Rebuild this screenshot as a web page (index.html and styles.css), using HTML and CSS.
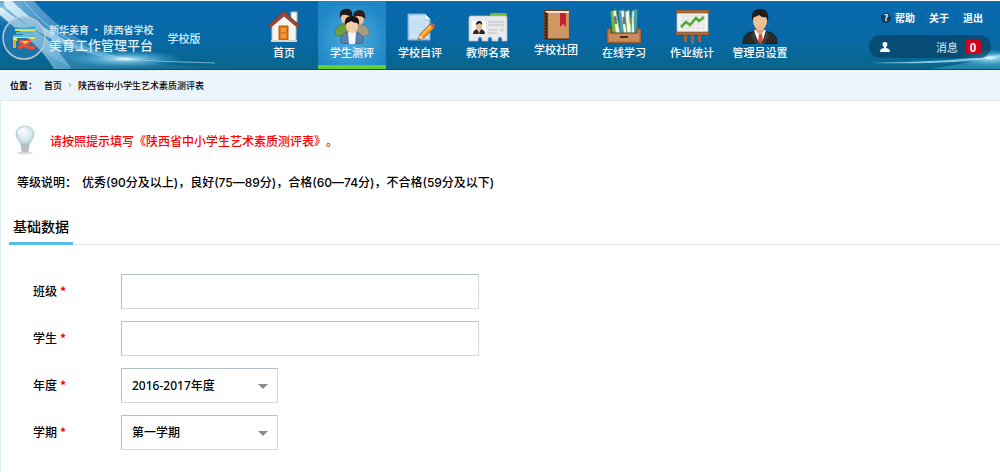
FILE: index.html
```html
<!DOCTYPE html>
<html lang="zh-CN">
<head>
  <meta charset="UTF-8" />
  <title>陕西省中小学生艺术素质测评表</title>
  <link rel="stylesheet" href="styles.css">
</head>
<body>
  <header class="header">
    <svg class="beam beam-left" viewBox="0 0 240 68" aria-hidden="true">
      <defs>
        <linearGradient id="ray" x1="0" y1="0" x2="1" y2="1">
          <stop offset="0" stop-color="#fff" stop-opacity=".8" />
          <stop offset=".5" stop-color="#8fd0f5" stop-opacity=".7" />
          <stop offset="1" stop-color="#8fd0f5" stop-opacity="0" />
        </linearGradient>
        <linearGradient id="band" x1="0" y1="0" x2="1" y2="1">
          <stop offset="0" stop-color="#fff" stop-opacity=".9" />
          <stop offset="1" stop-color="#7cc4ea" stop-opacity=".55" />
        </linearGradient>
        <radialGradient id="flare">
          <stop offset="0" stop-color="#fff" />
          <stop offset=".25" stop-color="#a8e4fb" stop-opacity=".7" />
          <stop offset="1" stop-color="#4bb4e6" stop-opacity="0" />
        </radialGradient>
      </defs>
      <path d="M0 0H34C52 22 80 42 120 56C160 66 200 64 235 68H75C45 56 20 30 0 6Z" fill="url(#ray)" opacity=".45" />
      <path d="M0 6C20 20 42 32 52 43C60 52 66 60 72 68H54C42 46 20 32 0 14Z" fill="url(#band)" />
      <path d="M12 0C38 26 75 48 118 58C78 54 30 32 4 4V0Z" fill="url(#band)" />
      <path d="M24 0C48 32 90 54 130 58C160 61 190 61 215 62" fill="none" stroke="#b9e6fa" stroke-opacity=".6" />
      <ellipse cx="125" cy="58" rx="58" ry="9" fill="url(#flare)" />
      <ellipse cx="4" cy="8" rx="36" ry="20" fill="url(#flare)" opacity=".45" />
    </svg>
    <svg class="beam beam-right" viewBox="0 0 130 68" aria-hidden="true">
      <path d="M0 62C50 61 95 59 130 54V56C95 62 50 63 0 62Z" fill="#aee6fa" opacity=".75" />
      <path d="M60 68C85 64 110 60 130 52V68Z" fill="#5fc6e6" opacity=".35" />
      <ellipse cx="120" cy="57" rx="34" ry="9" fill="url(#flare)" />
    </svg>

    <a class="brand" href="#">
      <svg class="logo" viewBox="0 0 46 46" aria-hidden="true">
        <circle cx="23" cy="23" r="21" fill="#3f8fc4" fill-opacity=".35" stroke="#bcc7d0" stroke-width="1.5" />
        <path d="M14 12Q24 14 34 11V14H14Z" fill="#35a9c4" />
        <path d="M14 14H34V16H14Z" fill="#d8dc63" />
        <path d="M15 17H32V19H15Z" fill="#4fb9cf" />
        <path d="M12 20H34V23H12Z" fill="#58bdd3" />
        <path d="M12 22H34V24H29V23H16V26H12Z" fill="#f3e24e" />
        <path d="M12 25H15V33H12Z" fill="#f3a51f" />
        <path d="M18 25H30V28L26 30Q29 32 34 31V34Q27 35 23 32Q20 34 17 34V31L20 30L18 28Z" fill="#e8503c" />
        <path d="M20 26H28L24 29Z" fill="#f7d94e" />
      </svg>
      <span class="brand-name">
        <span class="brand-top">新华美育 · 陕西省学校</span>
        <span class="brand-main">美育工作管理平台</span>
      </span>
      <span class="brand-edition">学校版</span>
    </a>

    <nav class="nav">
      <a href="#">
        <svg viewBox="0 0 36 36" aria-hidden="true">
          <path d="M25 4H31V14H25Z" fill="#f3f3f1" stroke="#b9b9b9" />
          <path d="M6 17L18 6L30 17V33H6Z" fill="#f6f5f2" stroke="#c4c1bb" />
          <path d="M2 18L18 3L34 18L32 20L18 8L4 20Z" fill="#9d4638" stroke="#713025" stroke-width=".7" />
          <path d="M12 17H23V33H12Z" fill="#fff" />
          <path d="M13 18H22V32H13Z" fill="#e17b1d" stroke="#a9520d" />
          <path d="M15 20H20V24H15ZM15 26H20V30H15Z" fill="#f09a3d" />
          <path d="M5 32H31V34H5Z" fill="#d8d5cf" />
        </svg>
        <span>首页</span>
      </a>
      <a class="active" href="#">
        <svg viewBox="0 0 36 36" aria-hidden="true">
          <path d="M1 27C1 20 4 17 10 16H15V28Q6 29 1 27Z" fill="#6f9e3c" stroke="#4c7425" stroke-width=".6" />
          <path d="M21 28V16H26C32 17 35 20 35 27Q30 29 21 28Z" fill="#a69c84" stroke="#756d5a" stroke-width=".6" />
          <ellipse cx="12" cy="10" rx="5" ry="6" fill="#edc19a" />
          <ellipse cx="25" cy="11" rx="5" ry="6" fill="#edc19a" />
          <path d="M6 10C5 3 8 1 12 1C17 0 19 4 18 9C15 8 12 6 8 7Z" fill="#1d1a1b" />
          <path d="M19 9C19 4 22 2 26 2C30 2 32 6 31 11C28 8 25 7 19 9Z" fill="#29201f" />
          <path d="M7 35C6 28 9 24 18 24C27 24 30 28 29 35Q18 37 7 35Z" fill="#5c81ad" stroke="#35577f" stroke-width=".7" />
          <path d="M14 24H22L21 36H15Z" fill="#f4f8fc" />
          <ellipse cx="18" cy="18" rx="6" ry="7" fill="#f5cfac" />
          <path d="M11 17C10 11 13 8 18 8C23 8 26 11 25 17L23 15Q20 15 17 13Q14 15 13 15Z" fill="#171516" />
        </svg>
        <span>学生测评</span>
      </a>
      <a href="#">
        <svg viewBox="0 0 36 36" aria-hidden="true">
          <path d="M6 6H23L28 11V32H6Z" fill="#b5d8f0" stroke="#7bb0d6" />
          <path d="M8 8H22V13H26V30H8Z" fill="#cae4f5" />
          <path d="M23 6L28 11H23Z" fill="#f2f9fe" />
          <path d="M10 13H21M10 16H24M10 19H23M10 22H19M10 25H17" stroke="#b4d6ec" stroke-width=".7" />
          <path d="M16 32L18 26L28 16L32 20L22 30Z" fill="#f58f22" stroke="#a85410" stroke-width=".7" />
          <path d="M20 27L29 18" stroke="#ffd06a" stroke-width="1.5" />
          <path d="M28 16L30 15Q33 16 33 18L32 20Z" fill="#c96452" />
          <path d="M16 32L18 27L21 30Z" fill="#f6dfb9" />
          <path d="M16 32L17 30L18 31Z" fill="#222" />
        </svg>
        <span>学校自评</span>
      </a>
      <a href="#">
        <svg class="wide" viewBox="0 0 40 36" aria-hidden="true">
          <path d="M22 10V7Q22 5 24 5H37Q39 5 39 7V12H22Z" fill="#76bc32" />
          <path d="M3 8H37Q39 8 39 10V33H34V31A2 2 0 0 0 30 31V33H24V31A2 2 0 0 0 20 31V33H14V31A2 2 0 0 0 10 31V33H1V10Q1 8 3 8Z" fill="#e7e9ea" stroke="#bfc4c8" stroke-width=".7" />
          <path d="M4 13H18V26H4Z" fill="#fff" />
          <path d="M5 26Q5 21 11 21Q17 21 17 26Z" fill="#25272b" />
          <path d="M9 21H13L11 25Z" fill="#fff" />
          <path d="M11 22L12 26H10Z" fill="#d5342a" />
          <ellipse cx="11" cy="18" rx="3" ry="4" fill="#eabd96" />
          <path d="M8 17Q8 13 11 13Q15 13 14 17L12 15Z" fill="#202020" />
          <path d="M20 14H36M20 17H36M20 22H29M20 25H29M32 22H36" stroke="#b7bcc1" />
        </svg>
        <span>教师名录</span>
      </a>
      <a href="#">
        <svg class="short" viewBox="0 0 36 33" aria-hidden="true">
          <path d="M6 3Q6 2 8 2H31V32H8Q6 32 6 30Z" fill="#6a3d20" />
          <path d="M10 4H31V31H10Z" fill="#c98c5b" />
          <path d="M11 5H30V30H11Z" fill="#d09666" />
          <path d="M7 3H31V5H9Z" fill="#f2e6d4" />
          <path d="M8 5V31" stroke="#38200f" stroke-width="2" stroke-dasharray="2 1" />
          <path d="M22 5H28V19L25 16L22 19Z" fill="#c8202c" />
          <path d="M7 31H31" stroke="#4b2912" />
        </svg>
        <span>学校社团</span>
      </a>
      <a href="#">
        <svg viewBox="0 0 36 36" aria-hidden="true">
          <path d="M5 4L10 2L14 25H7Z" fill="#eef3ef" stroke="#79aa44" />
          <path d="M5 4L7 3L10 25H7Z" fill="#6db52c" />
          <path d="M13 3L18 2L21 25H15Z" fill="#eef3f3" stroke="#5b8f9b" />
          <path d="M13 3L15 3L18 25H15Z" fill="#4a9db0" />
          <path d="M19 4L23 2L26 25H21Z" fill="#f4f6f2" stroke="#7dae3c" />
          <path d="M26 3L31 2L30 25H25Z" fill="#e6eef2" stroke="#559c9b" />
          <path d="M28 3L31 2L30 25H28Z" fill="#43a398" />
          <path d="M8 9L10 8L11 16H9ZM17 9L19 9L19 16H17ZM23 9L24 16M28 9L28 16" fill="#69727a" stroke="#69727a" stroke-width=".5" />
          <path d="M1 22L5 19V25H31V19L35 22V34Q35 35 33 35H3Q1 35 1 34Z" fill="#b77748" stroke="#774321" stroke-width=".8" />
          <path d="M3 26H33V33H3Z" fill="#c98b5c" />
          <path d="M14 28H22V30H14Z" fill="#4b2a16" />
        </svg>
        <span>在线学习</span>
      </a>
      <a href="#">
        <svg viewBox="0 0 36 36" aria-hidden="true">
          <path d="M10 25H13V34H10ZM17 25H20V36H17ZM24 25H27V34H24Z" fill="#a06238" />
          <path d="M3 4H34V25H3Z" fill="#f3f3ef" stroke="#bdb9ad" stroke-width=".7" />
          <path d="M6 8H31M6 12H31M6 16H31M6 20H31M9 6V22M14 6V22M19 6V22M24 6V22M29 6V22" stroke="#d1d4d5" stroke-width=".6" />
          <path d="M2 2H35V5H2Z" fill="#a96d42" stroke="#714322" stroke-width=".6" />
          <path d="M2 24H35V27H2Z" fill="#a96d42" stroke="#714322" stroke-width=".6" />
          <path d="M7 19L12 14L16 17L22 10L25 13L30 9" fill="none" stroke="#51a836" stroke-width="2.5" />
        </svg>
        <span>作业统计</span>
      </a>
      <a href="#">
        <svg viewBox="0 0 36 36" aria-hidden="true">
          <path d="M1 36Q0 26 9 24L14 22H22L27 24Q36 26 35 36Z" fill="#292929" stroke="#151515" stroke-width=".6" />
          <path d="M12 22H24L20 36H16Z" fill="#f6f6f6" />
          <path d="M17 26H20L21 36H16Z" fill="#e14724" />
          <path d="M11 23L18 36H14L9 28ZM25 23L19 36H23L27 28Z" fill="#3d3d3e" />
          <path d="M14 18H22V23L18 27L14 23Z" fill="#dca577" />
          <ellipse cx="18" cy="13" rx="7" ry="9" fill="#f0bf93" />
          <path d="M10 13C9 4 12 1 18 1C25 1 27 5 26 13L24 9Q20 10 17 7Q14 9 12 9Z" fill="#201d1d" />
        </svg>
        <span>管理员设置</span>
      </a>
    </nav>

    <div class="account">
      <div class="links">
        <span class="help">?</span>
        <a href="#">帮助</a>
        <a href="#">关于</a>
        <a href="#">退出</a>
      </div>
      <div class="user">
        <svg class="person" viewBox="0 0 10 10" aria-hidden="true">
          <path d="M5 0C7 0 8 1 7 4L6 5V6L9 7Q10 8 10 10H0Q0 8 1 7L4 6V5L3 4C2 1 3 0 5 0Z" fill="#fff" />
        </svg>
        <a href="#">消息 <b class="count">0</b></a>
      </div>
    </div>
  </header>

  <div class="place">
    <strong>位置：</strong>
    <a href="#">首页</a>
    <svg class="arrow" viewBox="0 0 4 6" aria-hidden="true"><path d="M1 1L3 3L1 5" fill="none" stroke="#8a9da8" /></svg>
    <a href="#">陕西省中小学生艺术素质测评表</a>
  </div>

  <main class="main">
    <div class="tip">
      <svg class="bulb" viewBox="0 0 22 30" aria-hidden="true">
        <defs>
          <radialGradient id="glass" cx=".5" cy=".35" r=".65">
            <stop offset="0" stop-color="#f6fbfd" />
            <stop offset=".6" stop-color="#d3e5ed" />
            <stop offset="1" stop-color="#a3bfcc" />
          </radialGradient>
        </defs>
        <ellipse cx="11" cy="28" rx="8" ry="1.5" fill="#d9dcde" />
        <path d="M11 1C17 1 20 5 20 9C20 14 15 17 15 21H7C7 17 2 14 2 9C2 5 5 1 11 1Z" fill="url(#glass)" stroke="#a9c0cb" stroke-width=".7" />
        <path d="M5 9Q6 4 11 4" fill="none" stroke="#fff" stroke-width="2" />
        <path d="M7 21H15V26Q11 29 7 26Z" fill="#ccd1d4" />
        <path d="M7 22H15M7 24H15M8 26H14" stroke="#959da2" stroke-width=".7" />
      </svg>
      <p>请按照提示填写《陕西省中小学生艺术素质测评表》。</p>
    </div>

    <p class="levels"><span>等级说明：</span>优秀(90分及以上)，良好(75—89分)，合格(60—74分)，不合格(59分及以下)</p>

    <div class="title"><h2>基础数据</h2></div>

    <form class="form">
      <div class="row">
        <label for="class">班级<i>*</i></label>
        <input type="text" id="class" name="class" required />
      </div>
      <div class="row">
        <label for="student">学生<i>*</i></label>
        <input type="text" id="student" name="student" required />
      </div>
      <div class="row">
        <label for="year">年度<i>*</i></label>
        <div class="select">
          <select id="year" name="year">
            <option>2016-2017年度</option>
          </select>
        </div>
      </div>
      <div class="row">
        <label for="term">学期<i>*</i></label>
        <div class="select">
          <select id="term" name="term">
            <option>第一学期</option>
          </select>
        </div>
      </div>
    </form>
  </main>
</body>
</html>
```
FILE: styles.css
```css
* {
  box-sizing: border-box;
}

body {
  margin: 0;
  background: white;
  color: black;
  font-family: "Noto Sans CJK SC", sans-serif;
  font-size: 12px;
  font-weight: 500;
  text-spacing-trim: space-all;
}

a {
  color: inherit;
  text-decoration: none;
}

p,
h2 {
  margin: 0;
}

svg {
  display: block;
}

/* header */
.header {
  position: relative;
  display: flex;
  height: 70px;
  border-top: 1px solid white;
  border-bottom: 1px solid #064e6b;
  background: linear-gradient(#086aae, #0869a8 55%, #09658a);
  color: white;
}

.beam {
  position: absolute;
  top: 0;
  height: 68px;
}

.beam-left {
  left: 0;
  width: 240px;
}

.beam-right {
  right: 0;
  width: 130px;
}

.brand {
  position: relative;
  display: flex;
  align-items: center;
  flex: 0 0 250px;
  padding: 6px 0 0 1px;
}

.logo {
  width: 46px;
  height: 46px;
}

.brand-name {
  display: flex;
  flex-direction: column;
  margin-left: 2px;
  color: #e2f2fb;
}

.brand-top {
  font-size: 10px;
  line-height: 14px;
}

.brand-main {
  font-size: 13px;
  line-height: 16px;
}

.brand-edition {
  margin-left: 14px;
  font-size: 11px;
  color: #d5eaf6;
}

.nav {
  position: relative;
  display: flex;
}

.nav a {
  display: flex;
  flex-direction: column;
  align-items: center;
  width: 68px;
  padding-top: 7px;
  font-size: 11px;
  line-height: 16px;
  white-space: nowrap;
}

.nav svg {
  width: 36px;
  height: 36px;
}

.nav .wide {
  width: 40px;
}

.nav .short {
  height: 33px;
}

.nav .active {
  border-bottom: 4px solid #5fd02f;
  background: radial-gradient(circle at 50% 60%, #4fb0e0, #1e86c6 75%);
}

.account {
  position: relative;
  margin-left: auto;
  width: 122px;
  margin-right: 9px;
  padding-top: 9px;
}

.links {
  display: flex;
  align-items: center;
  justify-content: flex-end;
  height: 16px;
  padding-right: 8px;
  font-size: 10px;
  font-weight: bold;
}

.links a {
  line-height: 10px;
}

.links a + a {
  margin-left: 6px;
  padding-left: 7px;
  border-left: 1px solid #0b5688;
}

.help {
  width: 10px;
  height: 10px;
  margin-right: 4px;
  border-radius: 50%;
  background: #0b3c61;
  font-size: 9px;
  line-height: 10px;
  text-align: center;
}

.user {
  display: flex;
  align-items: center;
  justify-content: space-between;
  height: 23px;
  margin-top: 9px;
  padding: 0 10px 0 11px;
  border-radius: 12px;
  background: rgba(8, 62, 92, .65);
  font-size: 11px;
  color: #c3dbe8;
}

.user a {
  display: flex;
  align-items: center;
}

.person {
  width: 10px;
  height: 10px;
}

.count {
  width: 16px;
  height: 14px;
  margin-left: 7px;
  border-radius: 2px;
  background: #d0011b;
  color: white;
  line-height: 14px;
  text-align: center;
}

/* breadcrumb */
.place {
  display: flex;
  align-items: center;
  height: 31px;
  padding-left: 10px;
  border-bottom: 1px solid #dce9f2;
  background: #edf5fc;
  font-size: 9px;
}

.place strong {
  margin-right: 7px;
}

.arrow {
  width: 4px;
  height: 6px;
  margin: 0 6px;
}

/* content */
.main {
  padding: 24px 0 22px 8px;
  border-left: 1px solid #d9ebf5;
}

.tip {
  display: flex;
  align-items: center;
  padding-left: 5px;
  color: red;
}

.bulb {
  width: 22px;
  height: 30px;
  margin-right: 14px;
}

.levels {
  margin-top: 18px;
  padding-left: 8px;
  font-family: Inter, "Noto Sans CJK SC", sans-serif;
  line-height: 20px;
}

.levels span {
  margin-right: 5px;
}

.title {
  display: flex;
  margin-top: 20px;
  border-bottom: 1px solid #dde6eb;
}

.title h2 {
  margin-bottom: -1px;
  padding: 0 4px 3px;
  border-bottom: 3px solid #55bfe9;
  font-size: 14px;
  font-weight: 500;
  line-height: 26px;
}

.form {
  display: grid;
  gap: 12px;
  padding: 29px 0 0 24px;
}

.row {
  display: flex;
  align-items: center;
}

.row label {
  width: 88px;
  padding-bottom: 2px;
}

.row i {
  margin-left: 3px;
  color: red;
  font-style: normal;
  font-weight: bold;
}

.row input,
.row select {
  height: 35px;
  padding: 0 10px;
  border: 1px solid #d0dae0;
  border-top-color: #b5c1c8;
  border-left-color: #b5c1c8;
  border-radius: 0;
  background: white;
  color: black;
  font-family: "Noto Sans", "Noto Sans CJK SC", sans-serif;
  font-size: 12px;
  font-weight: 500;
}

.row input {
  width: 358px;
}

.select {
  position: relative;
}

.row select {
  display: block;
  width: 157px;
  appearance: none;
}

.select::after {
  content: "";
  position: absolute;
  top: 16px;
  right: 10px;
  border: 5px solid transparent;
  border-top-color: #8b8b8b;
  border-bottom: 0;
  pointer-events: none;
}
```
